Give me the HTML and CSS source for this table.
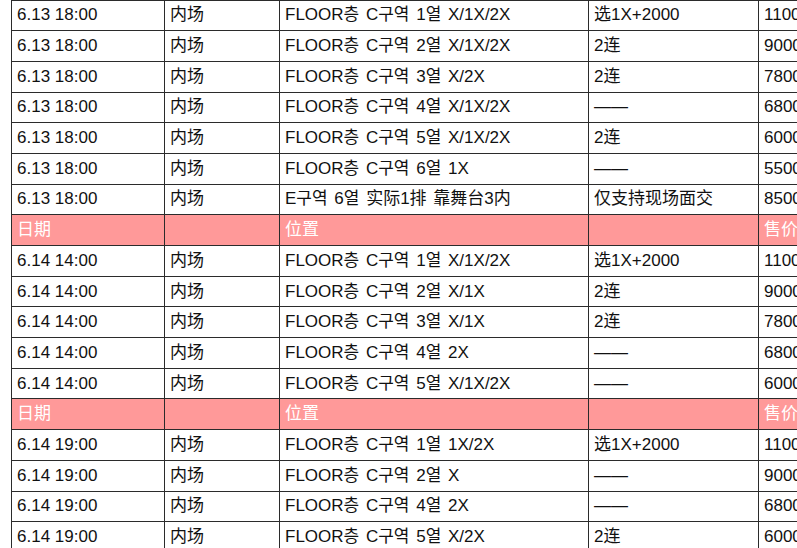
FILE: index.html
```html
<!DOCTYPE html>
<html lang="zh">
<head>
<meta charset="utf-8">
<title>票务</title>
<link rel="stylesheet" href="styles.css">
</head>
<body>
<div class="wrap">
<table class="tickets">
<colgroup>
<col class="c-date"><col class="c-area"><col class="c-pos"><col class="c-note"><col class="c-price">
</colgroup>
<tbody>
<tr><td>6.13 18:00</td><td>内场</td><td class="pos">FLOOR층 C구역 1열 X/1X/2X</td><td>选1X+2000</td><td>11000</td></tr>
<tr><td>6.13 18:00</td><td>内场</td><td class="pos">FLOOR층 C구역 2열 X/1X/2X</td><td>2连</td><td>9000</td></tr>
<tr><td>6.13 18:00</td><td>内场</td><td class="pos">FLOOR층 C구역 3열 X/2X</td><td>2连</td><td>7800</td></tr>
<tr><td>6.13 18:00</td><td>内场</td><td class="pos">FLOOR층 C구역 4열 X/1X/2X</td><td>——</td><td>6800</td></tr>
<tr><td>6.13 18:00</td><td>内场</td><td class="pos">FLOOR층 C구역 5열 X/1X/2X</td><td>2连</td><td>6000</td></tr>
<tr><td>6.13 18:00</td><td>内场</td><td class="pos">FLOOR층 C구역 6열 1X</td><td>——</td><td>5500</td></tr>
<tr><td>6.13 18:00</td><td>内场</td><td class="pos">E구역 6열 实际1排 靠舞台3内</td><td>仅支持现场面交</td><td>8500</td></tr>
<tr class="head"><td>日期</td><td></td><td class="pos">位置</td><td></td><td>售价</td></tr>
<tr><td>6.14 14:00</td><td>内场</td><td class="pos">FLOOR층 C구역 1열 X/1X/2X</td><td>选1X+2000</td><td>11000</td></tr>
<tr><td>6.14 14:00</td><td>内场</td><td class="pos">FLOOR층 C구역 2열 X/1X</td><td>2连</td><td>9000</td></tr>
<tr><td>6.14 14:00</td><td>内场</td><td class="pos">FLOOR층 C구역 3열 X/1X</td><td>2连</td><td>7800</td></tr>
<tr><td>6.14 14:00</td><td>内场</td><td class="pos">FLOOR층 C구역 4열 2X</td><td>——</td><td>6800</td></tr>
<tr><td>6.14 14:00</td><td>内场</td><td class="pos">FLOOR층 C구역 5열 X/1X/2X</td><td>——</td><td>6000</td></tr>
<tr class="head"><td>日期</td><td></td><td class="pos">位置</td><td></td><td>售价</td></tr>
<tr><td>6.14 19:00</td><td>内场</td><td class="pos">FLOOR층 C구역 1열 1X/2X</td><td>选1X+2000</td><td>11000</td></tr>
<tr><td>6.14 19:00</td><td>内场</td><td class="pos">FLOOR층 C구역 2열 X</td><td>——</td><td>9000</td></tr>
<tr><td>6.14 19:00</td><td>内场</td><td class="pos">FLOOR층 C구역 4열 2X</td><td>——</td><td>6800</td></tr>
<tr><td>6.14 19:00</td><td>内场</td><td class="pos">FLOOR층 C구역 5열 X/2X</td><td>2连</td><td>6000</td></tr>
</tbody>
</table>
</div>
</body>
</html>
```
FILE: styles.css
```css
html, body {
  margin: 0;
  padding: 0;
  background: #ffffff;
  overflow: hidden;
}
.wrap {
  padding-left: 11px;
  margin-top: -0.5px;
}
.tickets {
  border-collapse: collapse;
  table-layout: fixed;
  width: 868px;
  font-family: "Liberation Sans", "Noto Sans CJK SC", "Noto Sans CJK KR", sans-serif;
  font-size: 17px;
  color: #111;
}
.c-date { width: 153px; }
.c-area { width: 115px; }
.c-pos { width: 309px; }
.c-note { width: 170px; }
.c-price { width: 121px; }
.tickets tr {
  height: 30.7px;
}
.tickets td {
  border: 1px solid #2b2b2b;
  padding: 0 5px;
  line-height: 20px;
  vertical-align: middle;
  white-space: nowrap;
  overflow: hidden;
}
.tickets td.pos {
  word-spacing: 2px;
}
.tickets tr.head td {
  background: #ff9999;
  color: #ffffff;
}
```
